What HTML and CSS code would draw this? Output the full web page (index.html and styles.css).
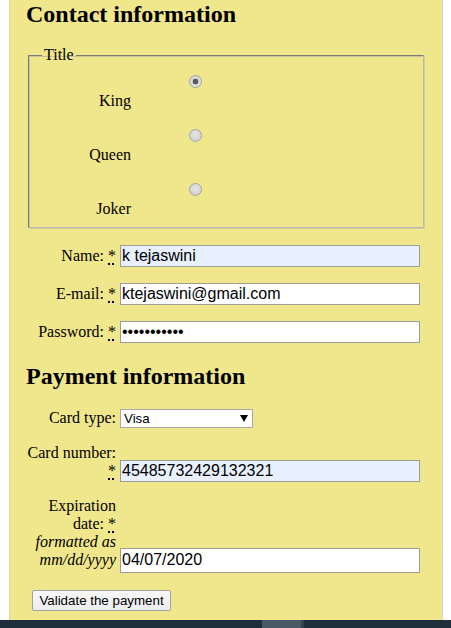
FILE: index.html
```html
<!DOCTYPE html>
<html lang="en">
<head>
<meta charset="utf-8">
<title>Payment form</title>
<link rel="stylesheet" href="styles.css">
</head>
<body>
<form class="panel">
  <section>
    <h2 class="heading">Contact information</h2>
    <fieldset class="titles">
      <legend>Title</legend>
      <div class="choice">
        <input class="radio" type="radio" name="title" id="title_1" value="K" checked>
        <label for="title_1">King</label>
      </div>
      <div class="choice">
        <input class="radio" type="radio" name="title" id="title_2" value="Q">
        <label for="title_2">Queen</label>
      </div>
      <div class="choice">
        <input class="radio" type="radio" name="title" id="title_3" value="J">
        <label for="title_3">Joker</label>
      </div>
    </fieldset>
    <div class="row first">
      <label for="name">Name: <strong><abbr title="required">*</abbr></strong></label>
      <input class="field autofill" type="text" id="name" value="k tejaswini">
    </div>
    <div class="row">
      <label for="mail">E-mail: <strong><abbr title="required">*</abbr></strong></label>
      <input class="field" type="text" id="mail" value="ktejaswini@gmail.com">
    </div>
    <div class="row">
      <label for="pwd">Password: <strong><abbr title="required">*</abbr></strong></label>
      <input class="field" type="password" id="pwd" value="abcdefghijk">
    </div>
  </section>
  <section>
    <h2 class="heading second">Payment information</h2>
    <div class="row cardtype">
      <label for="card">Card type:</label>
      <span class="select-wrap">
        <select class="select" id="card">
          <option>Visa</option>
          <option>Mastercard</option>
          <option>American Express</option>
        </select>
        <svg class="arrow" width="8" height="7" viewBox="0 0 8 7"><path d="M0 0H8L4 7Z" fill="#000"/></svg>
      </span>
    </div>
    <div class="row">
      <label for="number">Card number: <strong><abbr title="required">*</abbr></strong></label>
      <input class="field autofill" type="text" id="number" value="45485732429132321">
    </div>
    <div class="row expiry">
      <label for="expiration">Expiration date: <strong><abbr title="required">*</abbr></strong> <em>formatted as mm/dd/yyyy</em></label>
      <input class="field tall" type="text" id="expiration" value="04/07/2020">
    </div>
  </section>
  <div class="actions">
    <button class="button" type="button">Validate the payment</button>
  </div>
</form>
<div class="taskbar"><span class="seg"></span><span class="seg-edge"></span></div>
</body>
</html>
```

FILE: styles.css
```css
html, body {
  margin: 0;
  padding: 0;
  background: #ffffff;
}

body {
  font-family: "Liberation Serif", "Times New Roman", serif;
  font-size: 16px;
  color: #000;
}

.panel {
  width: 400px;
  margin: 0 0 0 9px;
  padding: 0 16px 9px;
  background: #f0e68c;
  border-left: 1px solid #d6d2b0;
  border-right: 1px solid #cfcfcf;
}

.heading {
  margin: 0;
  font-size: 24px;
  line-height: 28px;
  font-weight: bold;
}

.heading.second {
  margin-top: 19px;
}

.titles {
  margin: 18px 2px 0;
  padding: 0 12px 9px;
  border-color: #7a7a7a #b8b8b8 #b8b8b8 #7a7a7a;
  border-style: solid;
  border-width: 1px;
  box-shadow: inset 1px 1px 0 #c9c39a, 1px 1px 0 #d6cf95;
  min-width: 0;
}

.titles legend {
  padding: 0 2px;
  margin-left: 1px;
}

.choice {
  display: grid;
  grid-template-columns: 90px 13px;
  column-gap: 58px;
  margin-top: 19px;
}

.choice:first-of-type {
  margin-top: 11px;
}

.choice label {
  grid-column: 1;
  grid-row: 2;
  text-align: right;
}

.radio {
  grid-column: 2;
  grid-row: 1;
  appearance: none;
  -webkit-appearance: none;
  width: 13px;
  height: 13px;
  margin: 0 0 4px;
  border-radius: 50%;
  border: 1px solid #a6a6a6;
  background: radial-gradient(circle at 50% 40%, #e6e6e6 0, #d2d2d2 70%);
  box-sizing: border-box;
}

.radio:checked {
  background: radial-gradient(circle, #5a5a5a 0, #5a5a5a 2.6px, #dedede 3.2px, #d4d4d4 100%);
}

.row {
  display: grid;
  grid-template-columns: 90px 300px;
  column-gap: 4px;
  align-items: last baseline;
  margin-top: 16px;
}

.row.first {
  margin-top: 17px;
}

.row.cardtype {
  margin-top: 19px;
}

.row.expiry {
  margin-top: 15px;
}

.row label {
  text-align: right;
}

abbr {
  text-decoration: underline dotted;
  text-underline-offset: 2px;
  text-decoration-thickness: 2px;
  cursor: help;
}

strong {
  font-weight: normal;
}

.field {
  box-sizing: border-box;
  width: 300px;
  height: 22px;
  margin: 0;
  padding: 1px 1px;
  border: 1px solid #9c9c9c;
  background: #fff;
  font-family: "Liberation Sans", Arial, sans-serif;
  font-size: 16px;
  color: #000;
  outline: none;
}

.field.autofill {
  background: #e8f0fe;
}

.field.tall {
  height: 25px;
}

.select-wrap {
  position: relative;
  display: inline-block;
  width: 133px;
}

.select {
  appearance: none;
  -webkit-appearance: none;
  box-sizing: border-box;
  width: 133px;
  height: 19px;
  margin: 0;
  padding: 0 16px 0 3px;
  border: 1px solid #a9a9a9;
  border-radius: 0;
  background: #fff;
  font-family: "Liberation Sans", Arial, sans-serif;
  font-size: 13.33px;
  color: #000;
}

.arrow {
  position: absolute;
  left: 120px;
  top: 6px;
  pointer-events: none;
}

.actions {
  margin-top: 17px;
  padding-left: 6px;
  display: flex;
}

.button {
  box-sizing: border-box;
  height: 21px;
  width: 139px;
  margin: 0;
  padding: 1px 6px;
  border: 1px solid #a3a3a3;
  border-radius: 2px;
  background: linear-gradient(#f8f8f8, #ececec);
  font-family: "Liberation Sans", Arial, sans-serif;
  font-size: 13.33px;
  color: #000;
}

.taskbar {
  display: flex;
  height: 8px;
  background: #1f2e3a;
}

.seg {
  margin-left: 262px;
  width: 39px;
  background: #4b5865;
}

.seg-edge {
  width: 3px;
  background: #34424e;
}
```
